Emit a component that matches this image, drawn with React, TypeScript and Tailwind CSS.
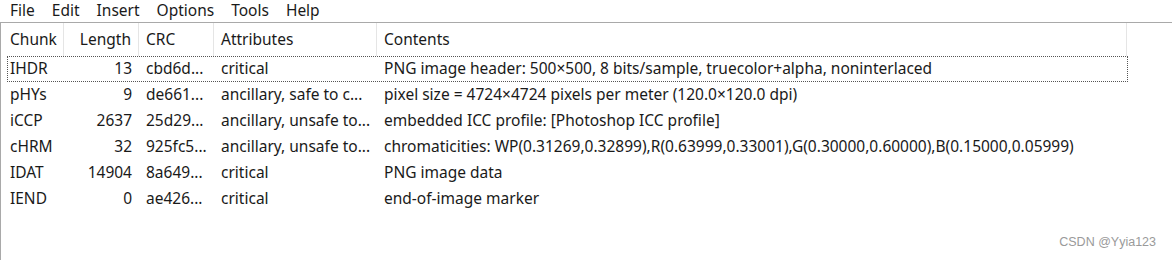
const menus = ["File", "Edit", "Insert", "Options", "Tools", "Help"];

const rows = [
  ["IHDR", "13", "cbd6d...", "critical", "PNG image header: 500×500, 8 bits/sample, truecolor+alpha, noninterlaced"],
  ["pHYs", "9", "de661...", "ancillary, safe to c...", "pixel size = 4724×4724 pixels per meter (120.0×120.0 dpi)"],
  ["iCCP", "2637", "25d29...", "ancillary, unsafe to...", "embedded ICC profile: [Photoshop ICC profile]"],
  ["cHRM", "32", "925fc5...", "ancillary, unsafe to...", "chromaticities: WP(0.31269,0.32899),R(0.63999,0.33001),G(0.30000,0.60000),B(0.15000,0.05999)"],
  ["IDAT", "14904", "8a649...", "critical", "PNG image data"],
  ["IEND", "0", "ae426...", "critical", "end-of-image marker"],
];

export default function App() {
  return (
    <div className="relative w-[1172px] h-[260px] bg-white text-[15.5px] text-[#1a1a1a] overflow-hidden" style={{ fontFamily: '"Noto Sans", sans-serif' }}>
      <div className="flex h-[22px] items-start leading-[20px] pl-[10px] gap-[17px]">
        {menus.map((m) => (
          <span key={m}>{m}</span>
        ))}
      </div>
      <div className="h-[238px] border-t border-l border-[#a9a9a9]">
        <div className="flex h-[33px] items-center">
          <div className="w-[63px] h-full flex items-center pl-[9px] border-r border-[#e5e5e5]">Chunk</div>
          <div className="w-[75px] h-full flex items-center justify-end pr-[7px] border-r border-[#e5e5e5]">Length</div>
          <div className="w-[75px] h-full flex items-center pl-[7px] border-r border-[#e5e5e5]">CRC</div>
          <div className="w-[163px] h-full flex items-center pl-[7px] border-r border-[#e5e5e5]">Attributes</div>
          <div className="w-[750px] h-full flex items-center pl-[7px] border-r border-[#e5e5e5]">Contents</div>
        </div>
        {rows.map((r, i) => (
          <div
            key={r[0]}
            className={
              "flex h-[26px] items-center ml-[6px] w-[1121px] border border-dotted " +
              (i === 0 ? "border-[#555]" : "border-transparent")
            }
          >
            <div className="w-[56px] pl-[2px]">{r[0]}</div>
            <div className="w-[75px] text-right pr-[7px]">{r[1]}</div>
            <div className="w-[75px] pl-[7px] whitespace-nowrap">{r[2]}</div>
            <div className="w-[163px] pl-[7px] whitespace-nowrap">{r[3]}</div>
            <div className="flex-1 pl-[7px] whitespace-nowrap">{r[4]}</div>
          </div>
        ))}
      </div>
      <div className="absolute right-[16px] bottom-[8px] text-[12.5px] text-[#9a9a9a]" style={{ fontFamily: '"Liberation Sans", sans-serif' }}>
        CSDN @Yyia123
      </div>
    </div>
  );
}
